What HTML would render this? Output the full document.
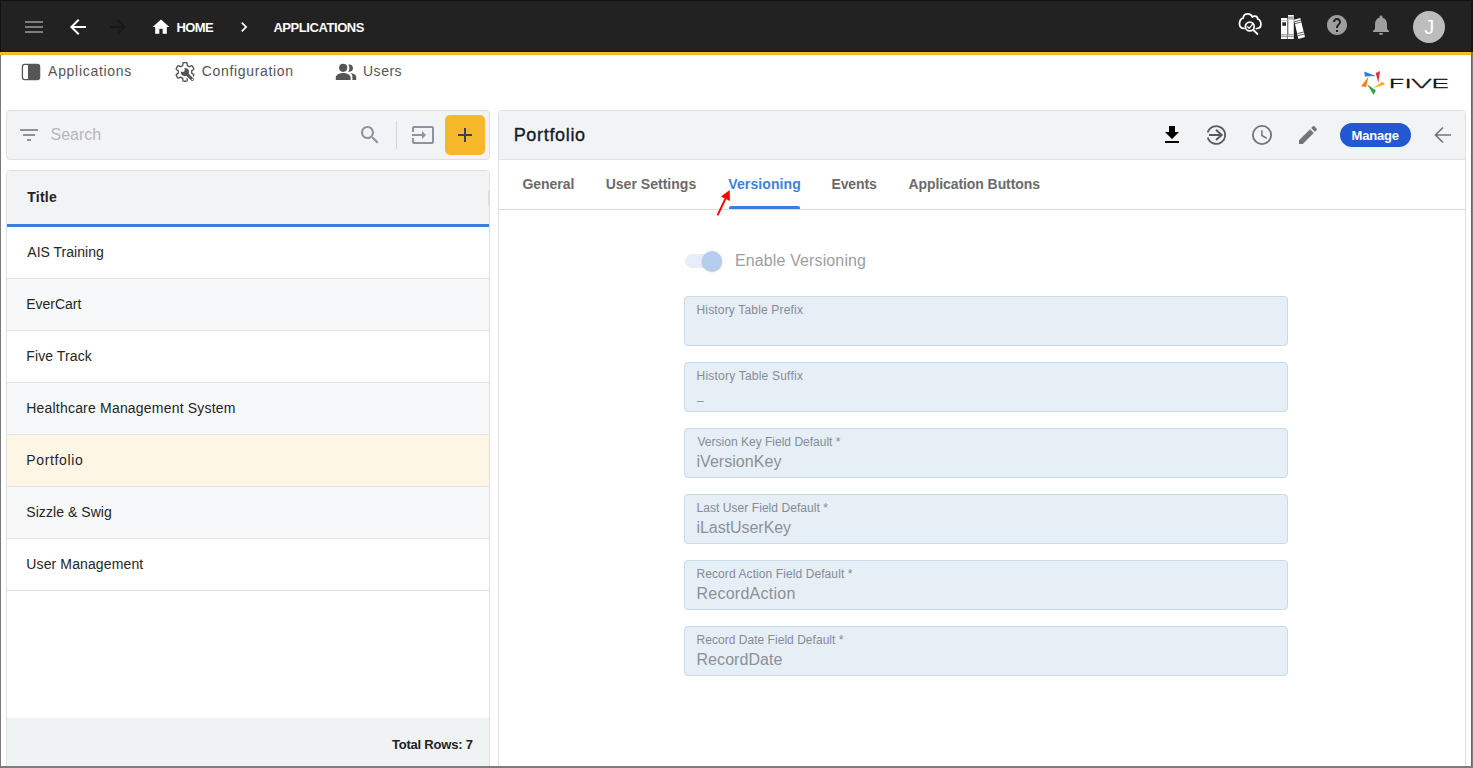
<!DOCTYPE html>
<html lang="en">
<head>
<meta charset="utf-8">
<title>Five - Applications</title>
<style>
*{box-sizing:border-box;margin:0;padding:0}
html,body{width:1473px;height:768px;overflow:hidden;background:#fff}
body{font-family:"Liberation Sans",sans-serif;color:#222;position:relative}
.abs{position:absolute}
svg{display:block;position:absolute;overflow:visible}
.t{position:absolute;white-space:nowrap;line-height:1}
#topbar{left:0;top:0;width:1473px;height:52px;background:#222222;border-bottom:1px solid #141a26}
#yellow{left:0;top:52px;width:1473px;height:3px;background:linear-gradient(#fdc12f,#f4b21f)}
#bl{left:0;top:55px;width:1px;height:713px;background:#7a7a7a}
#br{left:1471px;top:55px;width:2px;height:713px;background:linear-gradient(90deg,#5a5a5a,#8a8a8a)}
#br2{left:1471px;top:0;width:2px;height:52px;background:#161616}
#br3{left:1471px;top:52px;width:2px;height:3px;background:#9a7420}
#bb{left:0;top:766px;width:1473px;height:2px;background:#7c7c7c}
#bt{left:0;top:0;width:1473px;height:1px;background:#111}
#search{left:6px;top:110px;width:484px;height:50px;background:#f1f3f5;border:1px solid #e0e0e0;border-radius:4px}
#sdiv{left:396px;top:121px;width:1px;height:28px;background:#d4d7da}
#addbtn{left:445px;top:115px;width:40px;height:40px;background:#f7b72b;border-radius:5px}
#list{left:6px;top:170px;width:484px;height:600px;border:1px solid #e0e0e0;border-radius:4px 4px 0 0;background:#fff;overflow:hidden}
#lhead{left:0;top:0;width:482px;height:53px;background:#f1f3f5}
#lblue{left:0;top:53px;width:482px;height:3px;background:#3b7fd6}
.row{position:absolute;left:0;width:482px;height:52px;border-bottom:1px solid #e2e3e5}
.alt{background:#f7f8fa}
.sel{background:#fef6e4}
#lfoot{left:0;top:547px;width:482px;height:52px;background:#f0f3f4}
#panel{left:498px;top:110px;width:968px;height:660px;border:1px solid #e0e0e0;border-radius:4px 4px 0 0;background:#fff;overflow:hidden}
#phead{left:0;top:0;width:966px;height:49px;background:#f1f3f5;border-bottom:1px solid #e0e2e4}
#tabline{left:0;top:98px;width:966px;height:1px;background:#dcdcdc}
#tabul{left:230px;top:95px;width:71px;height:3px;background:#3b7fd6;border-radius:2px 2px 0 0}
#manage{left:1340px;top:123px;width:71px;height:24px;border-radius:12px;background:#2259d0}
#avatar{left:1413px;top:11px;width:32px;height:32px;border-radius:50%;background:#bdbdbd}
#track{left:685px;top:254px;width:34px;height:14px;border-radius:7px;background:#e7eef9}
#thumb{left:702px;top:251px;width:20px;height:20px;border-radius:50%;background:#b5cdee;box-shadow:0 1px 1.5px rgba(0,0,0,.28)}
.fld{position:absolute;left:684px;width:604px;height:50px;background:#e6eef6;border:1px solid #c8dbec;border-radius:4px}
#lhandle{left:488px;top:191px;width:1px;height:14px;background:#dcdcdc}
#bl2{left:0;top:0;width:1px;height:52px;background:#121212}

</style>
</head>
<body>
<div id="topbar" class="abs"></div>
<div id="yellow" class="abs"></div>
<div id="bt" class="abs"></div>

<div id="search" class="abs"></div>
<div id="sdiv" class="abs"></div>
<div id="addbtn" class="abs"></div>
<div id="list" class="abs">
  <div id="lhead" class="abs"></div>
  <div id="lblue" class="abs"></div>
  <div class="row" style="top:56px"></div>
  <div class="row alt" style="top:108px"></div>
  <div class="row" style="top:160px"></div>
  <div class="row alt" style="top:212px"></div>
  <div class="row sel" style="top:264px"></div>
  <div class="row alt" style="top:316px"></div>
  <div class="row" style="top:368px"></div>
  <div id="lfoot" class="abs"></div>
</div>

<div id="panel" class="abs">
  <div id="phead" class="abs"></div>
  <div id="tabline" class="abs"></div>
  <div id="tabul" class="abs"></div>
</div>
<div id="lhandle" class="abs"></div>
<div id="manage" class="abs"></div>
<div id="avatar" class="abs"></div>
<div id="track" class="abs"></div>
<div id="thumb" class="abs"></div>
<div class="fld" style="top:296px"></div>
<div class="fld" style="top:362px"></div>
<div class="fld" style="top:428px"></div>
<div class="fld" style="top:494px"></div>
<div class="fld" style="top:560px"></div>
<div class="fld" style="top:626px"></div>

<!-- top bar icons -->
<svg style="left:22px;top:15px" width="24" height="24" viewBox="0 0 24 24"><path fill="#7e7e7e" d="M3 18h18v-2H3v2zm0-5h18v-2H3v2zm0-7v2h18V6H3z"/></svg>
<svg style="left:66px;top:15px" width="24" height="24" viewBox="0 0 24 24"><path fill="#fff" d="M20 11H7.830l5.590-5.590L12 4l-8 8 8 8 1.410-1.410L7.830 13H20v-2z"/></svg>
<svg style="left:106px;top:15px" width="24" height="24" viewBox="0 0 24 24"><path fill="#181818" d="M12 4l-1.410 1.410L16.170 11H4v2h12.170l-5.580 5.590L12 20l8-8z"/></svg>
<svg style="left:151px;top:17px" width="20" height="20" viewBox="0 0 24 24"><path fill="#fff" d="M10 20v-6h4v6h5v-8h3L12 3 2 12h3v8z"/></svg>
<svg style="left:233.500px;top:17px" width="20" height="20" viewBox="0 0 24 24"><path fill="#fff" d="M10 6L8.590 7.410 13.170 12l-4.580 4.590L10 18l6-6z"/></svg>
<svg style="left:0;top:0" width="1473" height="56" viewBox="0 0 1473 56">
  <g fill="none" stroke="#fff" stroke-width="1.750" stroke-linecap="round" stroke-linejoin="round">
    <path d="M1244 28.400C1241 28.400 1239.500 26.500 1239.500 23.800C1239.500 21 1241 18.700 1243.100 18.100C1243.400 15.600 1245.400 13.900 1247.900 13.900C1250 13.900 1251.700 15.100 1252.400 17C1253 16.300 1253.900 16 1254.800 16C1256.500 16 1257.700 17.300 1257.700 19C1259.700 19.700 1260.900 21.800 1260.900 24.200C1260.900 26.800 1259 28.500 1256.300 28.500"/>
    <circle cx="1249.800" cy="26.500" r="4.400"/>
    <path d="M1253.300 30L1257.500 34"/>
    <path stroke-width="1.300" d="M1247.600 26.700L1249.200 28.400L1252.400 24.300"/>
  </g>
  <!-- books -->
  <rect x="1281" y="18" width="6.400" height="21" fill="#fff"/>
  <rect x="1281" y="20" width="6.400" height="0.900" fill="#c8c8c8"/>
  <rect x="1282.300" y="22.300" width="3.700" height="3.500" fill="#2a2a2a"/>
  <rect x="1281" y="34.300" width="6.400" height="0.900" fill="#8a8a8a"/>
  <rect x="1281" y="35.200" width="6.400" height="1" fill="#d0d0d0"/>
  <rect x="1281" y="36.200" width="6.400" height="0.900" fill="#8a8a8a"/>
  <rect x="1288" y="15" width="5.800" height="24" fill="#fff"/>
  <rect x="1288" y="16.400" width="5.800" height="3.200" fill="#a8a8a8"/>
  <rect x="1288" y="19.600" width="0.800" height="14.700" fill="#bdbdbd"/>
  <rect x="1288" y="34.300" width="5.800" height="0.900" fill="#8a8a8a"/>
  <rect x="1288" y="35.200" width="5.800" height="1" fill="#d0d0d0"/>
  <rect x="1288" y="36.200" width="5.800" height="0.900" fill="#8a8a8a"/>
  <polygon points="1294,19.700 1300.300,18.100 1305,37.100 1298.400,38.900" fill="#fff"/>
  <g stroke="#333" stroke-width="0.800">
    <path d="M1294.500 21.700L1300.800 20.100M1294.900 23.600L1301.300 22M1297.500 33.600L1303.700 32M1298 35.700L1304.300 34.100"/>
  </g>
</svg>
<svg style="left:1325px;top:13px" width="24" height="24" viewBox="0 0 24 24"><path fill="#9e9e9e" d="M12 2C6.480 2 2 6.480 2 12s4.480 10 10 10 10-4.480 10-10S17.520 2 12 2zm1 17h-2v-2h2v2zm2.070-7.750l-.900.920C13.450 12.900 13 13.500 13 15h-2v-.500c0-1.100.450-2.100 1.170-2.830l1.240-1.260c.370-.360.590-.860.590-1.410 0-1.100-.900-2-2-2s-2 .900-2 2H8c0-2.210 1.790-4 4-4s4 1.790 4 4c0 .880-.360 1.680-.930 2.250z"/></svg>
<svg style="left:1369px;top:13px" width="24" height="24" viewBox="0 0 24 24"><path fill="#9e9e9e" d="M12 22c1.100 0 2-.900 2-2h-4c0 1.100.890 2 2 2zm6-6v-5c0-3.070-1.640-5.640-4.500-6.320V4c0-.830-.670-1.500-1.500-1.500s-1.500.670-1.500 1.500v.680C7.630 5.360 6 7.920 6 11v5l-2 2v1h16v-1l-2-2z"/></svg>

<!-- menu icons -->
<svg style="left:0;top:56px" width="420" height="40" viewBox="0 56 420 40">
  <rect x="22.400" y="64.400" width="17.200" height="15.200" rx="2.300" fill="#fff" stroke="#555" stroke-width="1.300"/>
  <path d="M28 64.400H37.300A2.300 2.300 0 0 1 39.600 66.700V77.300A2.300 2.300 0 0 1 37.300 79.600H28Z" fill="#555"/>
  <!-- users -->
  <g fill="#555">
    <circle cx="343.200" cy="67.800" r="4.100"/>
    <path d="M335.800 80V77.200C335.800 74.300 340.700 72.900 343.200 72.900S350.600 74.300 350.600 77.200V80Z"/>
    <path d="M349.400 64.600C351.400 64.600 353 66.200 353 68.200S351.400 71.800 349.400 71.800C349 71.800 348.600 71.700 348.200 71.600C349 70.600 349.400 69.500 349.400 68.200S349 65.800 348.200 64.800C348.600 64.700 349 64.600 349.400 64.600Z"/>
    <path d="M350.300 73C351.600 73.900 352.400 75.100 352.400 76.800V80H356.200V76.800C356.200 74.700 352.900 73.400 350.300 73Z"/>
  </g>
</svg>
<svg style="left:170px;top:58px" width="30" height="28" viewBox="170 58 30 28">
  <path d="M191.70 71.90 L191.70 72.02 L191.70 72.13 L191.69 72.25 L191.68 72.37 L191.67 72.48 L191.66 72.60 L191.65 72.72 L191.63 72.83 L191.62 72.95 L191.67 73.08 L191.84 73.23 L192.10 73.41 L192.42 73.61 L192.76 73.84 L193.10 74.07 L193.40 74.31 L193.64 74.54 L193.78 74.75 L193.79 74.93 L193.74 75.08 L193.68 75.23 L193.62 75.38 L193.56 75.53 L193.50 75.68 L193.43 75.83 L193.36 75.98 L193.29 76.12 L193.21 76.27 L193.13 76.41 L193.05 76.55 L192.97 76.69 L192.89 76.83 L192.80 76.97 L192.71 77.10 L192.62 77.23 L192.52 77.37 L192.43 77.50 L192.33 77.63 L192.23 77.75 L192.12 77.88 L192.02 78.00 L191.86 78.07 L191.60 78.06 L191.29 77.97 L190.93 77.83 L190.56 77.65 L190.19 77.47 L189.86 77.30 L189.57 77.16 L189.35 77.09 L189.22 77.11 L189.12 77.18 L189.03 77.25 L188.94 77.32 L188.84 77.39 L188.75 77.45 L188.65 77.52 L188.55 77.58 L188.45 77.64 L188.35 77.70 L188.25 77.76 L188.15 77.82 L188.04 77.87 L187.94 77.92 L187.83 77.97 L187.73 78.02 L187.62 78.07 L187.51 78.11 L187.40 78.15 L187.32 78.26 L187.27 78.49 L187.24 78.81 L187.23 79.18 L187.21 79.59 L187.17 80.00 L187.11 80.38 L187.03 80.70 L186.92 80.93 L186.77 81.03 L186.61 81.06 L186.45 81.09 L186.29 81.11 L186.13 81.13 L185.97 81.15 L185.81 81.16 L185.65 81.18 L185.49 81.19 L185.32 81.19 L185.16 81.20 L185.00 81.20 L184.84 81.20 L184.68 81.19 L184.51 81.19 L184.35 81.18 L184.19 81.16 L184.03 81.15 L183.87 81.13 L183.71 81.11 L183.55 81.09 L183.39 81.06 L183.23 81.03 L183.08 80.93 L182.97 80.70 L182.89 80.38 L182.83 80.00 L182.79 79.59 L182.77 79.18 L182.76 78.81 L182.73 78.49 L182.68 78.26 L182.60 78.15 L182.49 78.11 L182.38 78.07 L182.27 78.02 L182.17 77.97 L182.06 77.92 L181.96 77.87 L181.85 77.82 L181.75 77.76 L181.65 77.70 L181.55 77.64 L181.45 77.58 L181.35 77.52 L181.25 77.45 L181.16 77.39 L181.06 77.32 L180.97 77.25 L180.88 77.18 L180.78 77.11 L180.65 77.09 L180.43 77.16 L180.14 77.30 L179.81 77.47 L179.44 77.65 L179.07 77.83 L178.71 77.97 L178.40 78.06 L178.14 78.07 L177.98 78.00 L177.88 77.88 L177.77 77.75 L177.67 77.63 L177.57 77.50 L177.48 77.37 L177.38 77.23 L177.29 77.10 L177.20 76.97 L177.11 76.83 L177.03 76.69 L176.95 76.55 L176.87 76.41 L176.79 76.27 L176.71 76.12 L176.64 75.98 L176.57 75.83 L176.50 75.68 L176.44 75.53 L176.38 75.38 L176.32 75.23 L176.26 75.08 L176.21 74.93 L176.22 74.75 L176.36 74.54 L176.60 74.31 L176.90 74.07 L177.24 73.84 L177.58 73.61 L177.90 73.41 L178.16 73.23 L178.33 73.08 L178.38 72.95 L178.37 72.83 L178.35 72.72 L178.34 72.60 L178.33 72.48 L178.32 72.37 L178.31 72.25 L178.30 72.13 L178.30 72.02 L178.30 71.90 L178.30 71.78 L178.30 71.67 L178.31 71.55 L178.32 71.43 L178.33 71.32 L178.34 71.20 L178.35 71.08 L178.37 70.97 L178.38 70.85 L178.33 70.72 L178.16 70.57 L177.90 70.39 L177.58 70.19 L177.24 69.96 L176.90 69.73 L176.60 69.49 L176.36 69.26 L176.22 69.05 L176.21 68.87 L176.26 68.72 L176.32 68.57 L176.38 68.42 L176.44 68.27 L176.50 68.12 L176.57 67.97 L176.64 67.82 L176.71 67.68 L176.79 67.53 L176.87 67.39 L176.95 67.25 L177.03 67.11 L177.11 66.97 L177.20 66.83 L177.29 66.70 L177.38 66.57 L177.48 66.43 L177.57 66.30 L177.67 66.17 L177.77 66.05 L177.88 65.92 L177.98 65.80 L178.14 65.73 L178.40 65.74 L178.71 65.83 L179.07 65.97 L179.44 66.15 L179.81 66.33 L180.14 66.50 L180.43 66.64 L180.65 66.71 L180.78 66.69 L180.88 66.62 L180.97 66.55 L181.06 66.48 L181.16 66.41 L181.25 66.35 L181.35 66.28 L181.45 66.22 L181.55 66.16 L181.65 66.10 L181.75 66.04 L181.85 65.98 L181.96 65.93 L182.06 65.88 L182.17 65.83 L182.27 65.78 L182.38 65.73 L182.49 65.69 L182.60 65.65 L182.68 65.54 L182.73 65.31 L182.76 64.99 L182.77 64.62 L182.79 64.21 L182.83 63.80 L182.89 63.42 L182.97 63.10 L183.08 62.87 L183.23 62.77 L183.39 62.74 L183.55 62.71 L183.71 62.69 L183.87 62.67 L184.03 62.65 L184.19 62.64 L184.35 62.62 L184.51 62.61 L184.68 62.61 L184.84 62.60 L185.00 62.60 L185.16 62.60 L185.32 62.61 L185.49 62.61 L185.65 62.62 L185.81 62.64 L185.97 62.65 L186.13 62.67 L186.29 62.69 L186.45 62.71 L186.61 62.74 L186.77 62.77 L186.92 62.87 L187.03 63.10 L187.11 63.42 L187.17 63.80 L187.21 64.21 L187.23 64.62 L187.24 64.99 L187.27 65.31 L187.32 65.54 L187.40 65.65 L187.51 65.69 L187.62 65.73 L187.73 65.78 L187.83 65.83 L187.94 65.88 L188.04 65.93 L188.15 65.98 L188.25 66.04 L188.35 66.10 L188.45 66.16 L188.55 66.22 L188.65 66.28 L188.75 66.35 L188.84 66.41 L188.94 66.48 L189.03 66.55 L189.12 66.62 L189.22 66.69 L189.35 66.71 L189.57 66.64 L189.86 66.50 L190.19 66.33 L190.56 66.15 L190.93 65.97 L191.29 65.83 L191.60 65.74 L191.86 65.73 L192.02 65.80 L192.12 65.92 L192.23 66.05 L192.33 66.17 L192.43 66.30 L192.52 66.43 L192.62 66.57 L192.71 66.70 L192.80 66.83 L192.89 66.97 L192.97 67.11 L193.05 67.25 L193.13 67.39 L193.21 67.53 L193.29 67.68 L193.36 67.82 L193.43 67.97 L193.50 68.12 L193.56 68.27 L193.62 68.42 L193.68 68.57 L193.74 68.72 L193.79 68.87 L193.78 69.05 L193.64 69.26 L193.40 69.49 L193.10 69.73 L192.76 69.96 L192.42 70.19 L192.10 70.39 L191.84 70.57 L191.67 70.72 L191.62 70.85 L191.63 70.97 L191.65 71.08 L191.66 71.20 L191.67 71.32 L191.68 71.43 L191.69 71.55 L191.70 71.67 L191.70 71.78 L191.70 71.90Z" fill="none" stroke="#555" stroke-width="1.400" stroke-linejoin="round"/>
  <path d="M186.300 73.600L192.400 79.500" stroke="#fff" stroke-width="5.400" stroke-linecap="round"/>
  <circle cx="184.900" cy="72.100" r="4.100" fill="#555"/>
  <circle cx="182.500" cy="69.700" r="2.300" fill="#fff"/>
  <path d="M185.500 72.800L192.300 79.400" stroke="#555" stroke-width="3" stroke-linecap="round"/>
  <circle cx="192.400" cy="79.500" r="0.700" fill="#fff"/>
</svg>

<!-- FIVE logo -->
<svg style="left:1355px;top:66px" width="100" height="34" viewBox="1355 66 100 34">
  <polygon points="1364.300,71.600 1364.800,76.400 1375.800,76.100" fill="#2f7ed8"/>
  <polygon points="1380,70.900 1375.700,72.900 1378.400,82.700" fill="#e03030"/>
  <polygon points="1382.100,81.700 1385.300,84.400 1373.300,87.900" fill="#f7b21e"/>
  <polygon points="1367.100,84.300 1375.900,90.400 1373.500,94.700" fill="#34a04a"/>
  <polygon points="1368.400,76.800 1361,86.300 1366.200,87.100" fill="#f7821e"/>
  <text x="0" y="0" transform="translate(1387.400 87.500) scale(2.510 1)" font-family="DejaVu Sans, Liberation Sans, sans-serif" font-weight="200" font-size="12.600" fill="#111" stroke="#111" stroke-width="0.600" vector-effect="non-scaling-stroke" letter-spacing="-0.850">FIVE</text>
</svg>

<!-- search bar icons -->
<svg style="left:17px;top:123px" width="24" height="24" viewBox="0 0 24 24"><path fill="#8a939e" d="M10 18h4v-2h-4v2zM3 6v2h18V6H3zm3 7h12v-2H6v2z"/></svg>
<svg style="left:358px;top:123px" width="24" height="24" viewBox="0 0 24 24"><path fill="#8a939e" d="M15.500 14h-.790l-.280-.270C15.410 12.590 16 11.110 16 9.500 16 5.910 13.090 3 9.500 3S3 5.910 3 9.500 5.910 16 9.500 16c1.610 0 3.090-.590 4.230-1.570l.270.280v.790l5 4.990L20.490 19l-4.990-5zm-6 0C7.010 14 5 11.990 5 9.500S7.010 5 9.500 5 14 7.010 14 9.500 11.990 14 9.500 14z"/></svg>
<svg style="left:411px;top:123px" width="24" height="24" viewBox="0 0 24 24"><path fill="#8a939e" d="M21 3.010H3c-1.100 0-2 .900-2 2V9h2V4.990h18v14.030H3V15H1v4.010c0 1.100.900 1.980 2 1.980h18c1.100 0 2-.880 2-1.980v-14c0-1.110-.900-2-2-2zM11 16l4-4-4-4v3H1v2h10v3z"/></svg>
<svg style="left:453px;top:123px" width="24" height="24" viewBox="0 0 24 24"><path fill="#3c4250" d="M19 13h-6v6h-2v-6H5v-2h6V5h2v6h6v2z"/></svg>

<!-- panel header icons -->
<svg style="left:1160px;top:123px" width="24" height="24" viewBox="0 0 24 24"><path fill="#000" d="M19 9h-4V3H9v6H5l7 7 7-7zM5 18v2h14v-2H5z"/></svg>
<svg style="left:1200px;top:118px" width="90" height="34" viewBox="1200 118 90 34">
  <g fill="none" stroke="#5a5a5a" stroke-width="1.800">
    <path d="M1207.700 132.400A8.900 8.900 0 1 1 1207.700 137.600"/>
    <path stroke-width="2" d="M1209 134.900H1221.500M1216 129.700L1221.700 134.900L1216 140.100"/>
  </g>
  <g fill="none" stroke="#747474">
    <circle cx="1262" cy="135" r="9.100" stroke-width="1.800"/>
    <path stroke-width="1.500" d="M1261.900 130.200V135.500L1266.800 138.400"/>
  </g>
</svg>
<svg style="left:1296px;top:123px" width="24" height="24" viewBox="0 0 24 24"><path fill="#757575" d="M3 17.250V21h3.750L17.810 9.940l-3.750-3.750L3 17.250zM20.710 7.040c.390-.390.390-1.020 0-1.410l-2.340-2.340c-.390-.390-1.020-.390-1.410 0l-1.830 1.830 3.750 3.750 1.830-1.830z"/></svg>
<svg style="left:1431px;top:123px" width="24" height="24" viewBox="0 0 24 24"><path fill="none" stroke="#757575" stroke-width="1.700" d="M20 12H5M12 4.500L4.500 12L12 19.500"/></svg>

<!-- red arrow annotation -->
<svg style="left:710px;top:185px" width="30" height="36" viewBox="710 185 30 36">
  <path d="M717.500 215.400L725.500 198.600" stroke="#ff0000" stroke-width="2" fill="none"/>
  <polygon points="729.700,190.100 721,196.400 729.900,200.900" fill="#ff0000"/>
</svg>


<div class="t" id="x-home" style="left:176.50px;top:21.00px;font-size:13px;font-weight:700;color:#fff;letter-spacing:-0.576px;">HOME</div>
<div class="t" id="x-apps" style="left:273.40px;top:21.00px;font-size:13px;font-weight:700;color:#fff;letter-spacing:-0.432px;">APPLICATIONS</div>
<div class="t" id="x-m1" style="left:48.10px;top:64.00px;font-size:14px;font-weight:400;color:#555;letter-spacing:0.701px;">Applications</div>
<div class="t" id="x-m2" style="left:201.80px;top:64.00px;font-size:14px;font-weight:400;color:#555;letter-spacing:0.668px;">Configuration</div>
<div class="t" id="x-m3" style="left:363.00px;top:64.00px;font-size:14px;font-weight:400;color:#555;letter-spacing:0.510px;">Users</div>
<div class="t" id="x-srch" style="left:50.50px;top:127.00px;font-size:16px;font-weight:400;color:#b4b8bc;letter-spacing:0.001px;">Search</div>
<div class="t" id="x-title" style="left:27.30px;top:190.00px;font-size:14px;font-weight:700;color:#222;letter-spacing:0.240px;">Title</div>
<div class="t" id="x-r1" style="left:27.30px;top:245.00px;font-size:14px;font-weight:400;color:#252525;letter-spacing:0.016px;">AIS Training</div>
<div class="t" id="x-r2" style="left:26.30px;top:297.00px;font-size:14px;font-weight:400;color:#252525;letter-spacing:-0.021px;">EverCart</div>
<div class="t" id="x-r3" style="left:26.30px;top:349.00px;font-size:14px;font-weight:400;color:#252525;letter-spacing:0.098px;">Five Track</div>
<div class="t" id="x-r4" style="left:26.30px;top:401.00px;font-size:14px;font-weight:400;color:#252525;letter-spacing:0.196px;">Healthcare Management System</div>
<div class="t" id="x-r5" style="left:26.30px;top:453.00px;font-size:14px;font-weight:400;color:#252525;letter-spacing:0.641px;">Portfolio</div>
<div class="t" id="x-r6" style="left:26.30px;top:505.00px;font-size:14px;font-weight:400;color:#252525;letter-spacing:0.057px;">Sizzle &amp; Swig</div>
<div class="t" id="x-r7" style="left:26.30px;top:557.00px;font-size:14px;font-weight:400;color:#252525;letter-spacing:0.123px;">User Management</div>
<div class="t" id="x-tot" style="left:391.90px;top:738.00px;font-size:13px;font-weight:700;color:#222;letter-spacing:-0.209px;">Total Rows: 7</div>
<div class="t" id="x-ptitle" style="left:513.70px;top:126.00px;font-size:18px;font-weight:400;color:#151b2b;letter-spacing:0.672px;-webkit-text-stroke:0.35px #151b2b;">Portfolio</div>
<div class="t" id="x-t1" style="left:522.40px;top:177.00px;font-size:14px;font-weight:700;color:#6b6b6b;letter-spacing:-0.041px;">General</div>
<div class="t" id="x-t2" style="left:605.70px;top:177.00px;font-size:14px;font-weight:700;color:#6b6b6b;letter-spacing:0.020px;">User Settings</div>
<div class="t" id="x-t3" style="left:728.30px;top:177.00px;font-size:14px;font-weight:700;color:#3d82d8;letter-spacing:0.098px;">Versioning</div>
<div class="t" id="x-t4" style="left:831.50px;top:177.00px;font-size:14px;font-weight:700;color:#6b6b6b;letter-spacing:-0.125px;">Events</div>
<div class="t" id="x-t5" style="left:908.50px;top:177.00px;font-size:14px;font-weight:700;color:#6b6b6b;letter-spacing:-0.083px;">Application Buttons</div>
<div class="t" id="x-manage" style="left:1351.60px;top:129.00px;font-size:13px;font-weight:700;color:#fff;letter-spacing:-0.194px;">Manage</div>
<div class="t" id="x-enable" style="left:735.00px;top:253.00px;font-size:16px;font-weight:400;color:#9e9e9e;letter-spacing:0.126px;">Enable Versioning</div>
<div class="t" id="x-av" style="left:1424.20px;top:17.00px;font-size:20px;font-weight:400;color:#fff;letter-spacing:0.000px;">J</div>
<div class="t" id="x-fl0" style="left:696.50px;top:304.00px;font-size:12px;font-weight:400;color:#858c96;letter-spacing:0.170px;">History Table Prefix</div>
<div class="t" id="x-fl1" style="left:696.50px;top:370.00px;font-size:12px;font-weight:400;color:#858c96;letter-spacing:0.217px;">History Table Suffix</div>
<div class="t" id="x-fv1" style="left:697.00px;top:389.00px;font-size:12px;font-weight:400;color:#8c9198;letter-spacing:0.000px;">_</div>
<div class="t" id="x-fl2" style="left:697.50px;top:436.00px;font-size:12px;font-weight:400;color:#858c96;letter-spacing:0.009px;">Version Key Field Default *</div>
<div class="t" id="x-fv2" style="left:696.50px;top:454.00px;font-size:16px;font-weight:400;color:#8c9198;letter-spacing:0.041px;">iVersionKey</div>
<div class="t" id="x-fl3" style="left:696.50px;top:502.00px;font-size:12px;font-weight:400;color:#858c96;letter-spacing:0.059px;">Last User Field Default *</div>
<div class="t" id="x-fv3" style="left:696.50px;top:520.00px;font-size:16px;font-weight:400;color:#8c9198;letter-spacing:-0.050px;">iLastUserKey</div>
<div class="t" id="x-fl4" style="left:696.50px;top:568.00px;font-size:12px;font-weight:400;color:#858c96;letter-spacing:0.089px;">Record Action Field Default *</div>
<div class="t" id="x-fv4" style="left:696.50px;top:586.00px;font-size:16px;font-weight:400;color:#8c9198;letter-spacing:0.250px;">RecordAction</div>
<div class="t" id="x-fl5" style="left:696.50px;top:634.00px;font-size:12px;font-weight:400;color:#858c96;letter-spacing:0.035px;">Record Date Field Default *</div>
<div class="t" id="x-fv5" style="left:696.50px;top:652.00px;font-size:16px;font-weight:400;color:#8c9198;letter-spacing:0.058px;">RecordDate</div>

<div id="bl" class="abs"></div>
<div id="bl2" class="abs"></div>
<div id="br" class="abs"></div>
<div id="br2" class="abs"></div>
<div id="br3" class="abs"></div>
<div id="bb" class="abs"></div>

</body>
</html>
